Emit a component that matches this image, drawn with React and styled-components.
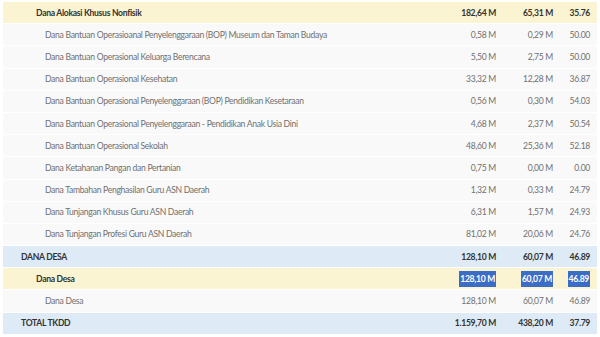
import styled, { createGlobalStyle } from "styled-components";

const GlobalStyle = createGlobalStyle`
  body {
    margin: 0;
    background: #ffffff;
    font-family: "Lato", "Noto Sans", sans-serif;
  }
`;

const rows = [
  { label: "Dana Alokasi Khusus Nonfisik", level: 1, kind: "sub", values: ["182,64 M", "65,31 M", "35.76"] },
  { label: "Dana Bantuan Operasioanal Penyelenggaraan (BOP) Museum dan Taman Budaya", level: 2, values: ["0,58 M", "0,29 M", "50.00"] },
  { label: "Dana Bantuan Operasional Keluarga Berencana", level: 2, values: ["5,50 M", "2,75 M", "50.00"] },
  { label: "Dana Bantuan Operasional Kesehatan", level: 2, values: ["33,32 M", "12,28 M", "36.87"] },
  { label: "Dana Bantuan Operasional Penyelenggaraan (BOP) Pendidikan Kesetaraan", level: 2, values: ["0,56 M", "0,30 M", "54.03"] },
  { label: "Dana Bantuan Operasional Penyelenggaraan - Pendidikan Anak Usia Dini", level: 2, values: ["4,68 M", "2,37 M", "50.54"] },
  { label: "Dana Bantuan Operasional Sekolah", level: 2, values: ["48,60 M", "25,36 M", "52.18"] },
  { label: "Dana Ketahanan Pangan dan Pertanian", level: 2, values: ["0,75 M", "0,00 M", "0.00"] },
  { label: "Dana Tambahan Penghasilan Guru ASN Daerah", level: 2, values: ["1,32 M", "0,33 M", "24.79"] },
  { label: "Dana Tunjangan Khusus Guru ASN Daerah", level: 2, values: ["6,31 M", "1,57 M", "24.93"] },
  { label: "Dana Tunjangan Profesi Guru ASN Daerah", level: 2, values: ["81,02 M", "20,06 M", "24.76"] },
  { label: "DANA DESA", level: 0, kind: "group", values: ["128,10 M", "60,07 M", "46.89"] },
  { label: "Dana Desa", level: 1, kind: "sub", selected: true, values: ["128,10 M", "60,07 M", "46.89"] },
  { label: "Dana Desa", level: 2, values: ["128,10 M", "60,07 M", "46.89"] },
  { label: "TOTAL TKDD", level: 0, kind: "group", values: ["1.159,70 M", "438,20 M", "37.79"] },
];

const indent = { 0: 18, 1: 33, 2: 42 };
const bg = { group: "#deebf6", sub: "#fbf4d2" };

export default function App() {
  return (
    <>
      <GlobalStyle />
      <Table>
        {rows.map((r, i) => (
          <Row key={i} $kind={r.kind}>
            <Label $level={r.level}>{r.label}</Label>
            {r.values.map((v, j) => (
              <Num key={j}>{r.selected ? <Selected>{v}</Selected> : v}</Num>
            ))}
          </Row>
        ))}
      </Table>
    </>
  );
}

const Table = styled.div`
  display: flex;
  flex-direction: column;
  gap: 1px;
  padding: 2px 3px 0;
`;

const Row = styled.div`
  display: grid;
  grid-template-columns: 1fr 70px 57px 37px;
  align-items: center;
  height: 21.2px;
  padding-right: 7px;
  background: ${(p) => bg[p.$kind] ?? "#f9f9f9"};
  color: ${(p) => (p.$kind ? "#333333" : "#707070")};
  font-weight: ${(p) => (p.$kind ? 700 : 400)};
  font-size: 8.6px;
  letter-spacing: -0.3px;
`;

const Label = styled.div`
  padding-left: ${(p) => indent[p.$level]}px;
  white-space: nowrap;
`;

const Num = styled.div`
  text-align: right;
  white-space: nowrap;
`;

const Selected = styled.span`
  background: #3b6cc6;
  color: #ffffff;
  padding: 3px 1px;
`;
